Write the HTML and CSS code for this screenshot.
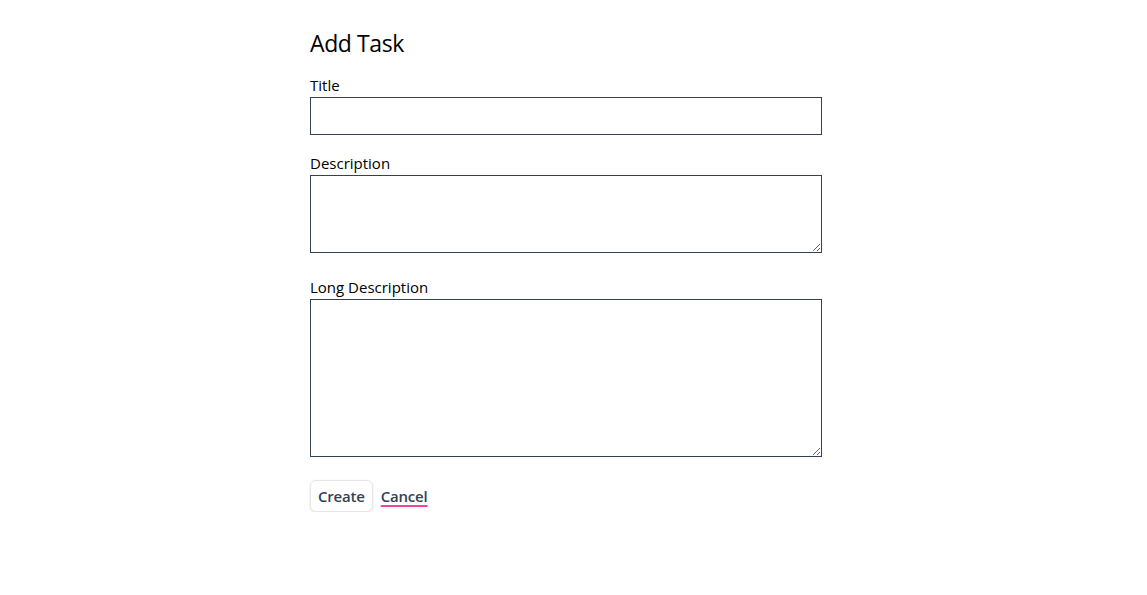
FILE: index.html
```html
<!DOCTYPE html>
<html>
<head>
<meta charset="utf-8">
<link rel="stylesheet" href="styles.css">
</head>
<body>
<main class="page">
  <h1 class="title">Add Task</h1>
  <form class="form">
    <div class="field">
      <label class="label" for="t">Title</label>
      <input class="input" id="t" type="text">
    </div>
    <div class="field">
      <label class="label" for="d">Description</label>
      <textarea class="textarea short" id="d"></textarea>
    </div>
    <div class="field">
      <label class="label" for="l">Long Description</label>
      <textarea class="textarea long" id="l"></textarea>
    </div>
    <div class="actions">
      <button type="button" class="btn">Create</button>
      <a href="#" class="link">Cancel</a>
    </div>
  </form>
</main>
</body>
</html>
```
FILE: styles.css
```css
* { box-sizing: border-box; }
html, body { margin: 0; padding: 0; background: #fff; }
body {
  font-family: "Open Sans", "Noto Sans", sans-serif;
  color: #000;
}
.page {
  width: 512px;
  margin-left: 310px;
  padding-top: 27px;
}
.title {
  font-size: 23px;
  font-weight: 400;
  line-height: 32px;
  margin: 0 0 15px;
  letter-spacing: -0.4px;
}
.field { margin-bottom: 17px; }
.label {
  display: block;
  font-size: 15px;
  line-height: 23px;
}
.input, .textarea {
  display: block;
  width: 512px;
  border: 1px solid #334155;
  border-radius: 0;
  margin: 0;
  padding: 4px;
  font: inherit;
}
.input { height: 38px; }
.textarea { resize: vertical; display: inline-block; vertical-align: baseline; margin-bottom: 1px; }
.textarea.short { height: 78px; }
.textarea.long { height: 158px; }
.actions {
  display: flex;
  align-items: center;
  gap: 8px;
  margin-top: 4px;
}
.btn {
  font-family: inherit;
  font-size: 15px;
  font-weight: 600;
  color: #334155;
  background: #fff;
  border: 1px solid #e5e7eb;
  border-radius: 6px;
  box-shadow: 0 1px 3px rgba(0,0,0,0.1);
  height: 32px;
  padding: 0 7px;
  letter-spacing: -0.2px;
}
.link {
  font-size: 15px;
  font-weight: 600;
  color: #334155;
  text-decoration: underline;
  text-decoration-color: #ec4899;
  text-decoration-thickness: 1.5px;
  text-underline-offset: 3px;
  letter-spacing: -0.2px;
}
```
